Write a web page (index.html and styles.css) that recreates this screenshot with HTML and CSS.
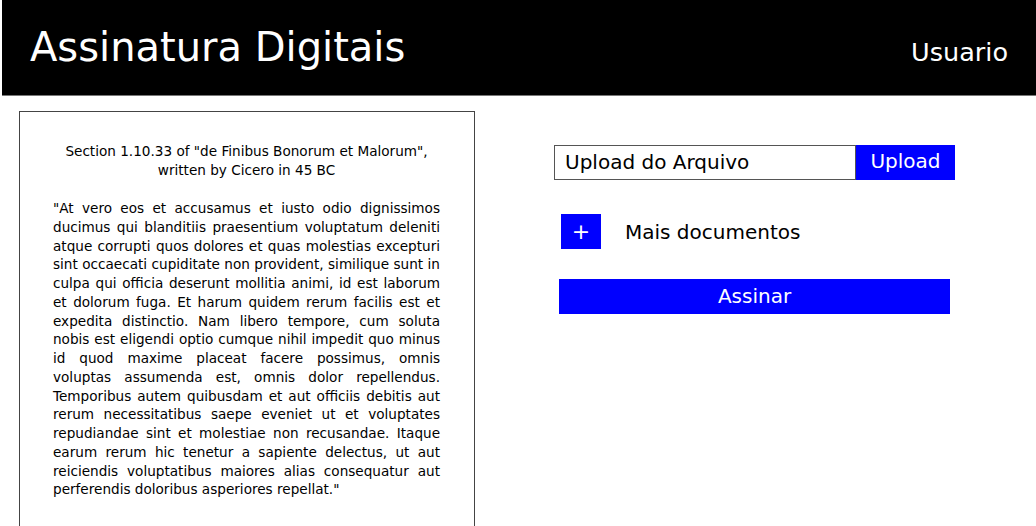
FILE: index.html
```html
<!DOCTYPE html>
<html>
<head>
<meta charset="utf-8">
<link rel="stylesheet" href="styles.css">
</head>
<body>
<header class="topbar">
  <h1 class="brand">Assinatura Digitais</h1>
  <span class="user">Usuario</span>
</header>
<main class="content">
  <section class="doc">
    <p class="doc-title">Section 1.10.33 of "de Finibus Bonorum et Malorum",<br>written by Cicero in 45 BC</p>
    <p class="doc-body">"At vero eos et accusamus et iusto odio dignissimos ducimus qui blanditiis praesentium voluptatum deleniti atque corrupti quos dolores et quas molestias excepturi sint occaecati cupiditate non provident, similique sunt in culpa qui officia deserunt mollitia animi, id est laborum et dolorum fuga. Et harum quidem rerum facilis est et expedita distinctio. Nam libero tempore, cum soluta nobis est eligendi optio cumque nihil impedit quo minus id quod maxime placeat facere possimus, omnis voluptas assumenda est, omnis dolor repellendus. Temporibus autem quibusdam et aut officiis debitis aut rerum necessitatibus saepe eveniet ut et voluptates repudiandae sint et molestiae non recusandae. Itaque earum rerum hic tenetur a sapiente delectus, ut aut reiciendis voluptatibus maiores alias consequatur aut perferendis doloribus asperiores repellat."</p>
  </section>
  <section class="actions">
    <div class="upload-row">
      <div class="file-field">Upload do Arquivo</div>
      <button class="btn upload-btn">Upload</button>
    </div>
    <div class="more-row">
      <button class="btn plus-btn">+</button>
      <span class="more-label">Mais documentos</span>
    </div>
    <button class="btn sign-btn">Assinar</button>
  </section>
</main>
</body>
</html>
```

FILE: styles.css
```css
html, body {
  margin: 0;
  padding: 0;
  background: #fff;
  font-family: "DejaVu Sans", sans-serif;
  color: #000;
  overflow: hidden;
  height: 526px;
}
.topbar {
  margin-left: 2px;
  height: 96px;
  box-sizing: border-box;
  background: #000;
  border-bottom: 1px solid #777;
  display: flex;
  align-items: center;
  justify-content: space-between;
  padding: 0 28px 0 28px;
}
.brand {
  margin: 0;
  font-weight: normal;
  font-size: 40px;
  color: #fff;
  line-height: 1;
  padding-bottom: 2px;
}
.user {
  color: #fff;
  font-size: 25.5px;
  padding-top: 8px;
}
.content {
  display: flex;
  align-items: flex-start;
  padding-top: 15px;
  padding-left: 19px;
}
.doc {
  width: 456px;
  height: 440px;
  box-sizing: border-box;
  border: 1px solid #444;
  padding: 30px 34px 0 33px;
  flex: none;
}
.doc-title {
  margin: 0 0 19px 0;
  text-align: center;
  font-size: 13.6px;
  line-height: 19px;
}
.doc-body {
  margin: 0;
  text-align: justify;
  font-size: 13.6px;
  line-height: 18.75px;
}
.actions {
  margin-left: 79px;
  padding-top: 34px;
  display: flex;
  flex-direction: column;
  width: 401px;
}
.btn {
  background: #0000ff;
  color: #fff;
  border: none;
  font-family: "DejaVu Sans", sans-serif;
  font-size: 20px;
  padding: 0;
  margin: 0;
  cursor: pointer;
}
.upload-row {
  display: flex;
  height: 35px;
}
.file-field {
  width: 302px;
  box-sizing: border-box;
  border: 1px solid #555;
  font-size: 20px;
  line-height: 33px;
  padding-left: 10px;
}
.upload-btn {
  width: 99px;
  height: 35px;
  padding-bottom: 4px;
}
.more-row {
  display: flex;
  align-items: center;
  margin-top: 34px;
  padding-left: 7px;
}
.plus-btn {
  width: 40px;
  height: 35px;
  font-size: 22px;
}
.more-label {
  margin-left: 24px;
  font-size: 20px;
}
.sign-btn {
  margin-top: 30px;
  margin-left: 5px;
  width: 391px;
  height: 35px;
  padding-bottom: 2px;
}
```
